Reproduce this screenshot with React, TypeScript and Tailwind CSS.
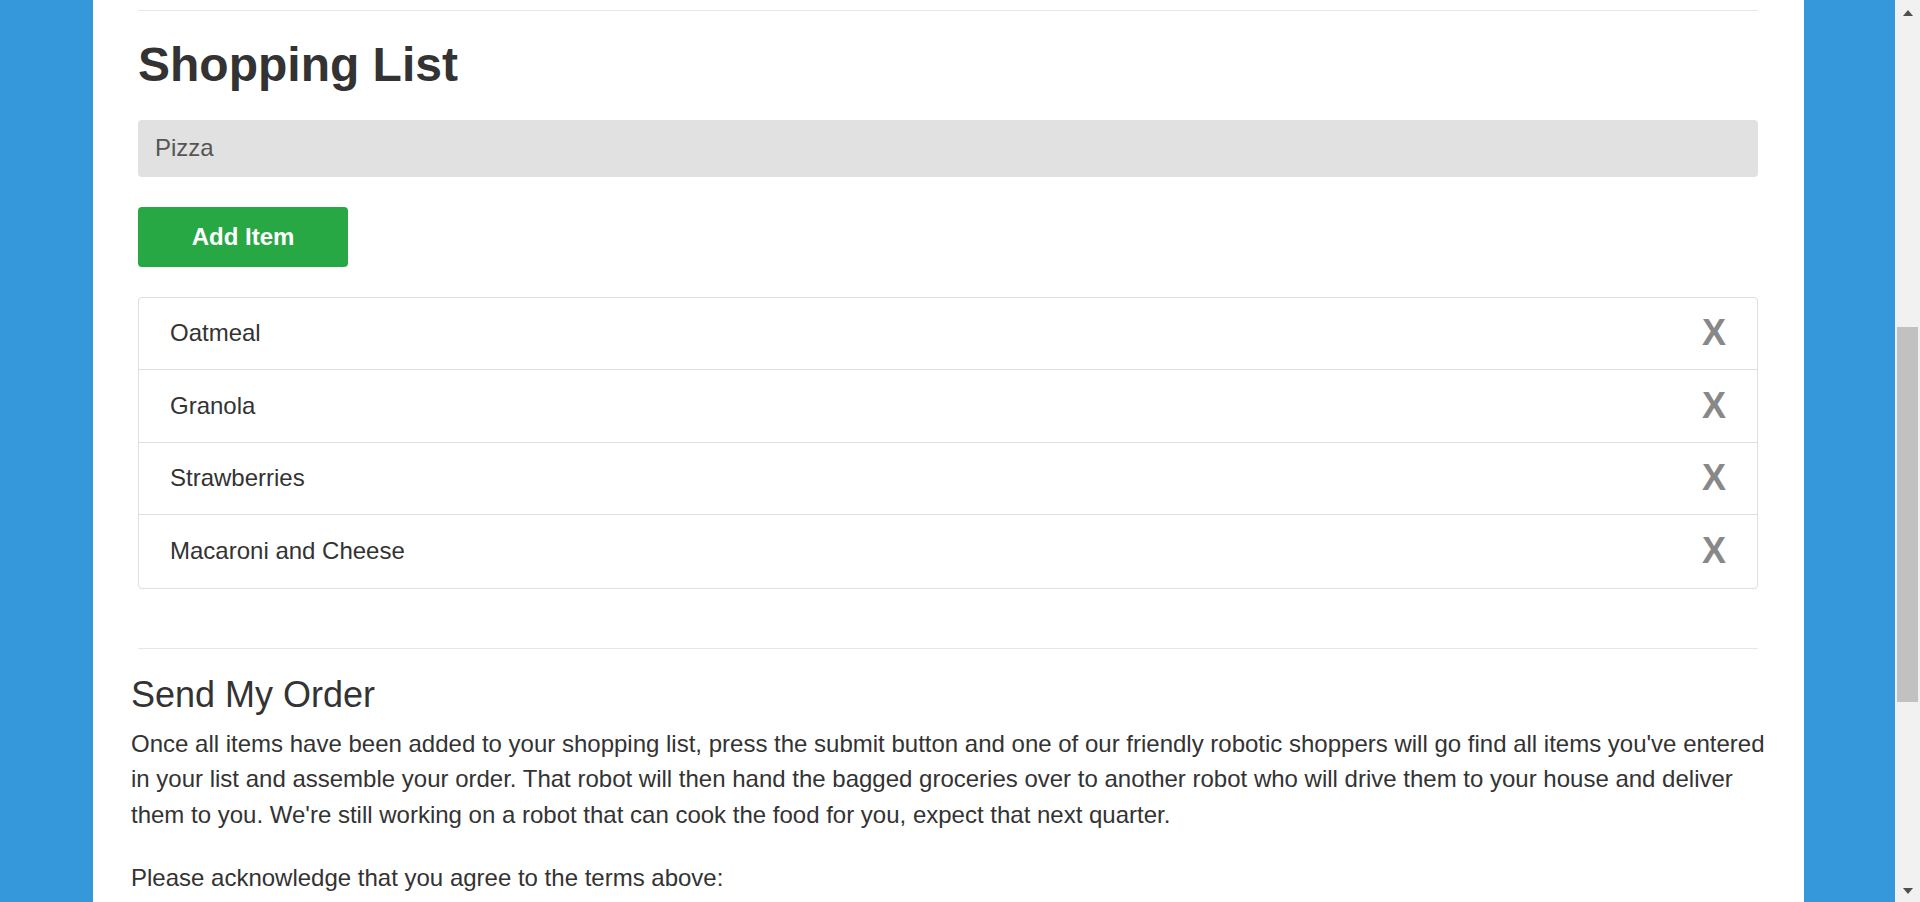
import React from "react"

const items = ["Oatmeal", "Granola", "Strawberries", "Macaroni and Cheese"]

const App = () => {
  return (
    <div className="flex h-[902px] overflow-hidden font-['Liberation_Sans',Arial,sans-serif] text-[#333]">
      <div className="flex-1 bg-[#3498db] pl-[93px] pr-[91px]">
        <div className="h-full bg-white pl-[45px] pr-[46px] pt-[10px]">
          <hr className="border-t border-[#e6e6e6]" />
          <h1 className="mt-[25px] text-[48px] font-bold leading-[57.6px]">Shopping List</h1>
          <div className="mt-[26px] flex h-[57px] items-center rounded-[4px] bg-[#e1e1e1] px-[17px] text-[24px] text-[#555]">
            Pizza
          </div>
          <button className="mt-[30px] h-[60px] w-[210px] rounded-[4px] bg-[#28a745] text-[24px] font-bold text-white">
            Add Item
          </button>
          <ul className="mt-[30px] rounded-[4px] border border-[#dfdfdf]">
            {items.map((item, i) => (
              <li
                key={item}
                className={
                  "flex h-[72.5px] items-center justify-between pl-[31px] pr-[31px] text-[24px] " +
                  (i < items.length - 1 ? "border-b border-[#dfdfdf]" : "")
                }
              >
                <span>{item}</span>
                <span className="text-[36px] font-bold leading-none text-[#888]">X</span>
              </li>
            ))}
          </ul>
          <hr className="mt-[59px] border-t border-[#e6e6e6]" />
          <div className="-mx-[7px]">
            <h2 className="mt-[26px] text-[36px] leading-[39.6px]">Send My Order</h2>
            <p className="mt-[11.5px] text-[24px] leading-[35.5px]">
              Once all items have been added to your shopping list, press the submit button and one of our friendly
              robotic shoppers will go find all items you've entered in your list and assemble your order. That robot
              will then hand the bagged groceries over to another robot who will drive them to your house and deliver
              them to you. We're still working on a robot that can cook the food for you, expect that next quarter.
            </p>
            <p className="mt-[28px] text-[24px] leading-[35.5px]">Please acknowledge that you agree to the terms above:</p>
          </div>
        </div>
      </div>
      {/* fake browser scrollbar */}
      <div className="flex w-[25px] flex-col bg-[#f1f1f1]">
        <div className="flex h-[25px] items-start justify-center pt-[10px]">
          <svg width="10" height="6" viewBox="0 0 10 6">
            <path d="M5 0 L10 6 L0 6 Z" fill="#505050" />
          </svg>
        </div>
        <div className="h-[302px]" />
        <div className="mx-[2px] h-[375px] bg-[#c1c1c1]" />
        <div className="flex-1" />
        <div className="flex h-[25px] items-end justify-center pb-[8px]">
          <svg width="10" height="6" viewBox="0 0 10 6">
            <path d="M0 0 L10 0 L5 6 Z" fill="#505050" />
          </svg>
        </div>
      </div>
    </div>
  )
}

export default App
